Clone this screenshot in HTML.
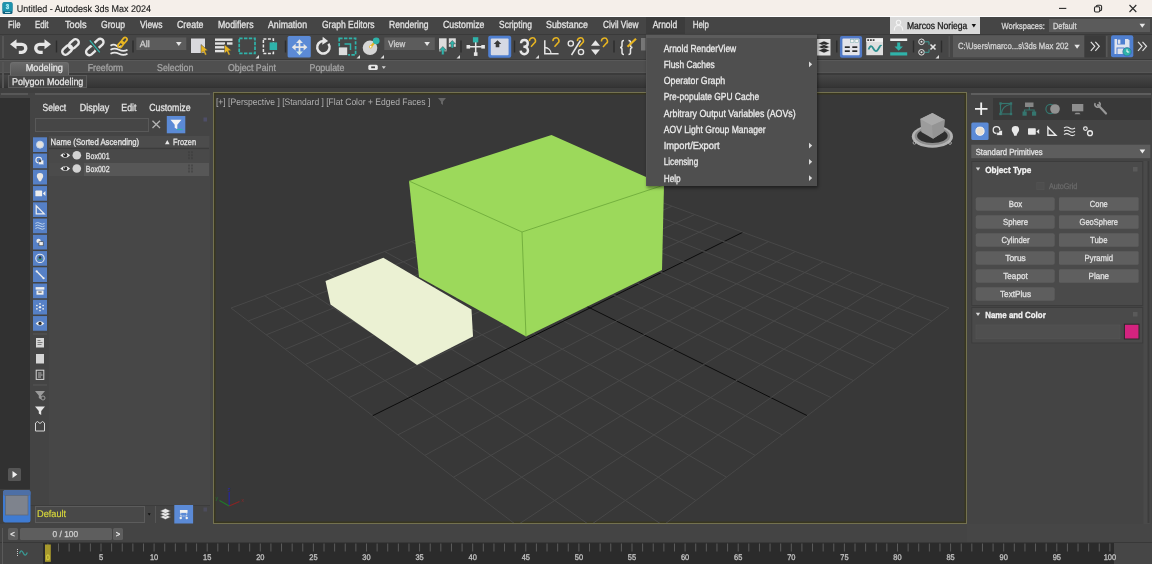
<!DOCTYPE html><html><head><meta charset="utf-8"><title>Untitled - Autodesk 3ds Max 2024</title><style>
*{box-sizing:border-box;margin:0;padding:0}
html,body{width:1152px;height:564px;overflow:hidden;background:#444;font-family:"Liberation Sans",sans-serif;}
.a{position:absolute}
.t{position:absolute;white-space:nowrap;color:#dcdcdc;-webkit-text-stroke:.15px currentColor}
svg{position:absolute;left:0;top:0;overflow:visible}
#vp{left:213px;top:92px;width:754px;height:432px;background:#383838;border:1px solid #737150;overflow:hidden;box-shadow:inset 0 0 0 1.5px #38361f}
</style></head><body>
<div class="a" style="left:0px;top:0px;width:1152px;height:17px;background:#f5efea;"></div>
<div class="a" style="left:0px;top:15.7px;width:1152px;height:1.3px;background:#ffffff;"></div>
<svg width="20" height="17"><rect x="2.500" y="2.300" width="10" height="11.700" rx="1.600" fill="#0f5f7c"/><rect x="2.500" y="2.300" width="10" height="9.200" rx="1.600" fill="#1f93ad"/><rect x="5" y="12.100" width="5.300" height=".9" fill="#c8ecf2"/></svg>
<svg width="1152" height="17"><g stroke="#2a2a2a" stroke-width="1.100" fill="none"><path d="M1059 8.400h7.300"/><rect x="1094.500" y="6.800" width="5.200" height="5.200" rx="1.200"/><path d="M1096.300 6.800v-0.200a1.300 1.300 0 0 1 1.300-1.300h2.700a1.300 1.300 0 0 1 1.300 1.300v2.700a1.300 1.300 0 0 1-1.300 1.300h-0.600"/><path d="M1129.500 5l6.800 7M1136.300 5l-6.800 7"/></g></svg>
<div class="a" style="left:0px;top:17px;width:1152px;height:17px;background:#454545;"></div>
<div class="a" style="left:646px;top:17px;width:39px;height:17px;background:#3c3c3c;"></div>
<div class="a" style="left:890px;top:17px;width:90px;height:16.5px;background:#d9d9d9;"></div>
<div class="a" style="left:1048.5px;top:18.5px;width:101.5px;height:13.5px;background:#5b5b5b;"></div>
<svg width="1152" height="34"><g fill="none" stroke="#f4f4f4" stroke-width="1.100"><circle cx="898.500" cy="22.500" r="2.200"/><path d="M894.300 30.500c0-3.500 1.800-5 4.200-5s4.200 1.500 4.200 5"/></g><path d="M971.600 23.900h4.400l-2.200 3.500z" fill="#111"/><path d="M1139.500 23.800h5.600l-2.800 4z" fill="#e8e8e8"/></svg>
<div class="a" style="left:0px;top:34px;width:1152px;height:26px;background:#464646;"></div>
<div class="a" style="left:0px;top:33.5px;width:1152px;height:1px;background:#3a3a3a;"></div>
<div class="a" style="left:2px;top:36px;width:2px;height:22px;background:#555;"></div>
<svg width="1152" height="62"><g fill="none" stroke="#e6e6e6" stroke-width="3.300" stroke-linejoin="miter"><path d="M15 44.300h6.800a4 4 0 0 1 0 8h-3"/><path d="M46.500 44.300h-6.800a4 4 0 0 0 0 8h3"/></g><path d="M10 44.300l6.500-5v10z" fill="#e6e6e6"/><path d="M51 44.300l-6.500-5v10z" fill="#e6e6e6"/><rect x="55.8" y="40.500" width="1.400" height="12" fill="#2c2c2c"/><rect x="132.3" y="40.500" width="1.400" height="12" fill="#2c2c2c"/><rect x="284.8" y="40.500" width="1.400" height="12" fill="#2c2c2c"/><rect x="460.3" y="40.500" width="1.400" height="12" fill="#2c2c2c"/><rect x="513.8" y="40.500" width="1.400" height="12" fill="#2c2c2c"/><rect x="613.3" y="40.500" width="1.400" height="12" fill="#2c2c2c"/><rect x="836.0999999999999" y="40.500" width="1.400" height="12" fill="#2c2c2c"/><rect x="912.8" y="40.500" width="1.400" height="12" fill="#2c2c2c"/><rect x="940.8" y="40.500" width="1.400" height="12" fill="#2c2c2c"/><g transform="translate(70.5 47) rotate(-42)" fill="none" stroke="#e6e6e6" stroke-width="2.4"><rect x="-10" y="-3.300" width="11" height="6.600" rx="3.300"/><rect x="-1" y="-3.300" width="11" height="6.600" rx="3.300"/></g><g transform="translate(94.8 47) rotate(-42)" fill="none" stroke="#e6e6e6" stroke-width="2.4"><rect x="-10.6" y="-3.300" width="11" height="6.600" rx="3.300"/><rect x="-0.4" y="-3.300" width="11" height="6.600" rx="3.300"/></g><path d="M89.500 40l10.500 12.500" stroke="#444" stroke-width="4"/><path d="M89.800 40.300l10 12" stroke="#2fb3aa" stroke-width="1.300"/><g fill="none" stroke="#e6e6e6" stroke-width="1.800"><path d="M110.500 45.800q3-2.200 6 0t5 0"/><path d="M110.500 49.800q4-2.200 8.500 0t8.500 0"/><path d="M110.500 53.800q4-2.200 8.500 0t8.500 0"/></g><g transform="translate(122.500 42.500) rotate(-50) scale(.6)" fill="none" stroke="#e8b521" stroke-width="2.900"><rect x="-10" y="-3.200" width="11" height="6.400" rx="3.200"/><rect x="-1" y="-3.200" width="11" height="6.400" rx="3.200"/></g><rect x="136.300" y="37.500" width="50" height="12.500" fill="#5c5c5c"/><path d="M176 42h5.600l-2.800 4z" fill="#e6e6e6"/><rect x="191" y="38.500" width="14" height="14.500" fill="#d9d9dd"/><path transform="translate(201 44.5) scale(1)" d="M0 0l0 9 2.300-2 1.800 3.800 1.700-.8-1.800-3.700 3-.3z" fill="#e8b521" stroke="#444" stroke-width=".5"/><rect x="215" y="38.5" width="17.5" height="2.400" fill="#e2e2e2"/><rect x="215" y="42.3" width="10" height="2.400" fill="#e2e2e2"/><rect x="215" y="46.1" width="10" height="2.400" fill="#e2e2e2"/><rect x="215" y="49.9" width="10" height="2.400" fill="#e2e2e2"/><rect x="227" y="42.300" width="5.500" height="2.400" fill="#e2e2e2"/><path transform="translate(224.5 44.5) scale(1)" d="M0 0l0 9 2.300-2 1.800 3.800 1.700-.8-1.800-3.700 3-.3z" fill="#e8b521" stroke="#444" stroke-width=".5"/><rect x="239.200" y="38.400" width="15.800" height="15" fill="none" stroke="#2fb3aa" stroke-width="1.700" stroke-dasharray="3.400 1.400"/><path d="M259 55v3.500h-3.500z" fill="#ddd"/><rect x="263.400" y="39" width="10" height="14.500" fill="none" stroke="#e6e6e6" stroke-width="1.500" stroke-dasharray="3 1.500"/><rect x="269.600" y="42.400" width="7.500" height="7.600" fill="#2fb3aa"/><rect x="287.600" y="36" width="23.200" height="21.500" rx="1.500" fill="#5b8ad6"/><g stroke="#e6e6e6" stroke-width="1.700" fill="none"><path d="M293.500 47.200h12M299.500 41v12.500"/></g><g fill="#e6e6e6"><path d="M299.500 39.200l3.400 3.800h-6.800z"/><path d="M299.500 55.300l3.400-3.800h-6.800z" fill="#cfe9e6"/><path d="M291.800 47.200l3.800-3.400v6.800z"/><path d="M307.400 47.200l-3.800-3.400v6.800z"/></g><path d="M328.400 43.700a6.200 6.200 0 1 1-5-2.600" fill="none" stroke="#e6e6e6" stroke-width="2.500"/><path d="M322.700 36.800l5.400 4.200-5.800 3.800z" fill="#e6e6e6"/><rect x="339.200" y="38.400" width="16.400" height="16.400" fill="none" stroke="#2fb3aa" stroke-width="1.700" stroke-dasharray="3.400 1.400"/><path d="M344.500 44h6v6" fill="none" stroke="#2fb3aa" stroke-width="1.500"/><rect x="338.400" y="47" width="9.300" height="8.600" fill="#dcdcdc" stroke="#444" stroke-width=".8"/><path d="M360 55v3.500h-3.500z" fill="#ddd"/><circle cx="370" cy="47.800" r="7.300" fill="#d6d6d6"/><path d="M370.500 47l4.500-5" stroke="#e8b521" stroke-width="2"/><circle cx="376.200" cy="40.800" r="3.400" fill="#2fb3aa"/><circle cx="370.700" cy="46.800" r="1.300" fill="#fff" stroke="#e8b521" stroke-width=".8"/><path d="M384 55v3.500h-3.500z" fill="#ddd"/><rect x="384.300" y="37.500" width="50.500" height="12.500" fill="#5c5c5c"/><path d="M424.300 42h5.600l-2.800 4z" fill="#e6e6e6"/><rect x="439" y="38.300" width="7.600" height="13" fill="#dcdcdc"/><rect x="448.800" y="38.300" width="7" height="8.500" fill="#dcdcdc"/><path d="M442.800 46.500l3.600 3.800h-2.300v4.500h-2.600v-4.500h-2.300z" fill="#2fb3aa" stroke="#444" stroke-width=".5"/><path d="M452.300 40.500l3.200 3.400h-2v4.200h-2.400v-4.200h-2z" fill="#2fb3aa" stroke="#444" stroke-width=".5"/><path d="M460 55v3.500h-3.500z" fill="#ddd"/><path d="M467.500 46.800h16.500M475.700 40v14" stroke="#e6e6e6" stroke-width="1.500"/><rect x="472.900" y="37.200" width="5.400" height="5.200" fill="#2fb3aa"/><rect x="466.500" y="45" width="3.600" height="3.600" fill="#e6e6e6"/><rect x="481.300" y="45" width="3.600" height="3.600" fill="#e6e6e6"/><rect x="473.900" y="52.300" width="3.600" height="3.600" fill="#e6e6e6"/><rect x="488.200" y="35.800" width="23" height="22" rx="2" fill="#4f7fd0"/><rect x="490.800" y="38.400" width="17.800" height="16.800" rx="1" fill="#d6d9e4"/><path d="M497.500 40.200l3.800 3.800h-2v3.300h-3.600v-3.300h-2z" fill="#3a3a3a"/><path d="M521 43.200a3.400 3.400 0 1 1 3.600 3.600h-1.200 1.200a3.700 3.700 0 1 1-4 3.800" fill="none" stroke="#e6e6e6" stroke-width="2.400"/><path d="M529.5 41.2a3 3 0 1 1 4.500 2.200l-3 3.300" fill="none" stroke="#e8b521" stroke-width="1.500"/><path d="M539 55v3.500h-3.500z" fill="#ddd"/><path d="M544.800 40.300v13.500h13.800" fill="none" stroke="#e6e6e6" stroke-width="1.500"/><path d="M544.800 47.500a6.300 6.300 0 0 1 6.300 6.300" fill="none" stroke="#e6e6e6" stroke-width="1.300"/><path d="M553 41.2a3 3 0 1 1 4.500 2.200l-3 3.300" fill="none" stroke="#e8b521" stroke-width="1.500"/><path d="M580.500 40.500l-9 14.500" stroke="#e6e6e6" stroke-width="1.500"/><circle cx="570.800" cy="43.500" r="2.600" fill="none" stroke="#e6e6e6" stroke-width="1.400"/><circle cx="581" cy="52" r="2.600" fill="none" stroke="#e6e6e6" stroke-width="1.400"/><path d="M577.5 41.2a3 3 0 1 1 4.500 2.200l-3 3.300" fill="none" stroke="#e8b521" stroke-width="1.500"/><path d="M595.500 40.200l4.500 5.600h-9z" fill="#e6e6e6"/><path d="M595.500 55l4.500-5.600h-9z" fill="#e6e6e6"/><path d="M601.5 41.5a3 3 0 1 1 4.500 2.200l-3 3.300" fill="none" stroke="#e8b521" stroke-width="1.500"/><path d="M624 40.500q-2 0-2 2v3q0 2-2 2 2 0 2 2v3q0 2 2 2M628.500 40.500q2 0 2 2v3q0 2 2 2-2 0-2 2v3q0 2-2 2" fill="none" stroke="#e6e6e6" stroke-width="1.500"/><path d="M627.500 46.800l8.500-8" stroke="#e8b521" stroke-width="2.200"/><rect x="641" y="38" width="4.500" height="12.500" fill="#777"/><rect x="817" y="39" width="13.500" height="16.500" fill="#e2e2e2"/><path d="M818 43.5l6-2.600 6 2.600-6 2.600z" fill="#2d2d2d" stroke="#e2e2e2" stroke-width=".6"/><path d="M818 47l6-2.600 6 2.600-6 2.600z" fill="#2d2d2d" stroke="#e2e2e2" stroke-width=".6"/><path d="M818 50.5l6-2.600 6 2.600-6 2.600z" fill="#2d2d2d" stroke="#e2e2e2" stroke-width=".6"/><rect x="839.900" y="36" width="22.200" height="21.700" rx="2" fill="#5079c6"/><rect x="842.400" y="38.500" width="17.200" height="16.700" rx="1" fill="#e3e4ea"/><rect x="850.500" y="39.300" width="3.400" height="3.300" fill="#f4f4f4" stroke="#7aa" stroke-width=".5"/><rect x="855" y="39.300" width="3.400" height="3.300" fill="#f4f4f4" stroke="#7aa" stroke-width=".5"/><g fill="#2c2c2c"><rect x="844.800" y="46.300" width="5" height="1.700"/><rect x="852.300" y="46.300" width="5" height="1.700"/><rect x="844.800" y="50.300" width="5" height="1.700"/><rect x="852.300" y="50.300" width="5" height="1.700"/></g><rect x="866.300" y="38.300" width="16.700" height="16.900" fill="#dedede"/><rect x="866.300" y="38.300" width="16.700" height="3.600" fill="#f0f0f0"/><g fill="#444"><rect x="867.300" y="39.200" width="1.800" height="1.800"/><rect x="870" y="39.200" width="1.800" height="1.800"/><rect x="872.700" y="39.200" width="1.800" height="1.800"/></g><path d="M868.500 49.500q2.200-6 4.800-1t5 .5 3-3" fill="none" stroke="#2b8f8f" stroke-width="1.800"/><rect x="890.200" y="38.500" width="17" height="2.500" fill="#ececec"/><rect x="890.200" y="52.300" width="17" height="3.200" fill="#2fb3aa"/><path d="M897.200 42.500h3v4h2.700l-4.200 4.300-4.200-4.300h2.700z" fill="#2fb3aa"/><g fill="none" stroke="#e6e6e6" stroke-width="1"><circle cx="921.500" cy="41.800" r="2.800"/><circle cx="921.500" cy="52.300" r="2.800"/><path d="M924.500 41.800h4.500v3M924.500 52.300h4.500v-3" stroke="#3a9a94"/></g><circle cx="921.500" cy="41.800" r="1" fill="#e6e6e6"/><circle cx="921.500" cy="52.300" r="1" fill="#e6e6e6"/><path d="M930.500 44.500l5 5M935.500 44.500l-5 5" stroke="#e6e6e6" stroke-width="1.600"/><path d="M939 55v3.500h-3.500z" fill="#ddd"/><rect x="948.500" y="36" width="1.500" height="21" fill="#535353"/><rect x="953" y="35.300" width="131.500" height="22" fill="#595959"/><path d="M1074.300 44.800h5.600l-2.800 4z" fill="#e6e6e6"/><rect x="1084.500" y="35.300" width="21" height="22" fill="#3b3b3b"/><path d="M1090.8 41.800l4 4.500-4 4.500M1095.3 41.800l4 4.500-4 4.500" fill="none" stroke="#e0e0e0" stroke-width="1.200"/><path d="M1138.0 41.800l4 4.500-4 4.500M1142.5 41.800l4 4.500-4 4.500" fill="none" stroke="#e0e0e0" stroke-width="1.200"/><rect x="1106" y="36" width="1.500" height="21" fill="#585858"/><rect x="1111" y="35.300" width="22.300" height="22" rx="2" fill="#4f7fd0"/><path d="M1114.500 39h13.500l1.500 1.500v13.500h-15z" fill="#dfe3ee"/><rect x="1117" y="39" width="8" height="5.500" fill="#4f7fd0"/><rect x="1117.800" y="39.600" width="2.600" height="4.200" fill="#dfe3ee"/><rect x="1116.500" y="47.500" width="8" height="6.500" fill="#4f7fd0"/><rect x="1117.500" y="48.500" width="6" height="5.500" fill="#dfe3ee"/><circle cx="1127" cy="51.800" r="4.200" fill="#2fb3aa" stroke="#2b5d9a" stroke-width=".6"/><path d="M1127 49.300v2.700h2.200" fill="none" stroke="#fff" stroke-width="1"/></svg>
<div class="a" style="left:0px;top:58.5px;width:1152px;height:1.1px;background:#3a3a3a;"></div>
<div class="a" style="left:0px;top:59.6px;width:1152px;height:1px;background:#595959;"></div>
<div class="a" style="left:0px;top:60.5px;width:1152px;height:12.5px;background:#4f4f4f;"></div>
<div class="a" style="left:0px;top:72.2px;width:1152px;height:0.9px;background:#565656;"></div>
<div class="a" style="left:0px;top:73px;width:1152px;height:1.5px;background:#3b3b3b;"></div>
<div class="a" style="left:0px;top:74.5px;width:1152px;height:12.5px;background:#3d3d3d;background:linear-gradient(#474747,#353535)"></div>
<div class="a" style="left:0px;top:87px;width:1152px;height:1.1px;background:#323232;"></div>
<div class="a" style="left:0px;top:88px;width:1152px;height:4.5px;background:#3f3f3f;"></div>
<div class="a" style="left:2px;top:62px;width:2px;height:26px;background:#555;"></div>
<div class="a" style="left:9.8px;top:62px;width:59.2px;height:12.5px;background:#5e5e5e;border-radius:3px 3px 0 0;background:linear-gradient(#6a6a6a,#565656);border:1px solid #6e6e6e;border-bottom:none"></div>
<svg width="400" height="80"><rect x="368.300" y="64.800" width="9.500" height="5.200" rx="1.600" fill="#e8e8e8"/><rect x="371.200" y="66.400" width="3.800" height="1.800" fill="#444"/><path d="M381.800 66.300h4l-2 2.600z" fill="#d0d0d0"/></svg>
<div class="a" style="left:8px;top:74.5px;width:79px;height:13.3px;background:#444;border:1px solid #5a5a5a;background:#454545"></div>
<div class="a" style="left:1px;top:93.3px;width:27px;height:1.6px;background:#585858;"></div>
<div class="a" style="left:35px;top:93.3px;width:175px;height:1.6px;background:#585858;"></div>
<div class="a" style="left:970.5px;top:93.3px;width:180px;height:1.6px;background:#5e5e5e;"></div>
<div class="a" style="left:0px;top:97.5px;width:30px;height:391.5px;background:#313131;"></div>
<div class="a" style="left:0px;top:489px;width:30px;height:35px;background:#3f3f3f;"></div>
<div class="a" style="left:30px;top:96px;width:180px;height:428px;background:#444444;"></div>
<div class="a" style="left:48.5px;top:136px;width:161px;height:368.5px;background:#474747;"></div>
<div class="a" style="left:7.5px;top:467.5px;width:13.8px;height:13.8px;background:#555;border-radius:1.500px"></div>
<svg width="40" height="530"><path d="M12.500 471l4.800 3.500-4.800 3.500z" fill="#f0f0f0"/></svg>
<div class="a" style="left:35px;top:117.5px;width:114px;height:14.5px;background:#464646;border:1px solid #595959"></div>
<svg width="215" height="140"><path d="M152.500 120.800l7.500 7.200M160 120.800l-7.500 7.200" stroke="#b4b4b4" stroke-width="1.300"/><rect x="166.800" y="116" width="18.500" height="17.300" fill="#5b8ad6"/><path d="M170.500 119.800h11l-4.200 5v4.500l-2.600-1.500v-3z" fill="#f4f4f4"/><path d="M177 129.500h5.500" stroke="#2fb3aa" stroke-width="1.300"/><rect x="203.500" y="117.500" width="3.500" height="4" fill="#4e4e68"/></svg>
<div class="a" style="left:48.5px;top:136.2px;width:160.5px;height:11.3px;background:#4c4c4c;"></div>
<div class="a" style="left:48.5px;top:147.5px;width:160.5px;height:1px;background:#3c3c3c;"></div>
<svg width="215" height="150"><path d="M165 144.300l2.300-4.300 2.300 4.300z" fill="#e8e8e8"/></svg>
<div class="a" style="left:48.5px;top:149.5px;width:160.5px;height:13px;background:#494949;"></div>
<div class="a" style="left:83.5px;top:163px;width:125.5px;height:12.7px;background:#575757;"></div>
<div class="a" style="left:48.5px;top:163px;width:35px;height:12.7px;background:#4b4b4b;"></div>
<svg width="215" height="180"><path d="M60.300 155.2q4.900-5 9.800 0q-4.900 5-9.800 0z" fill="#ececec"/><circle cx="65.200" cy="155.2" r="2.100" fill="#2a2a2a"/><circle cx="64.500" cy="154.5" r=".7" fill="#bbb"/><circle cx="76.800" cy="155.2" r="4.300" fill="#d2d2d2"/><path d="M189 151.2v8M192 151.2v8" stroke="#3b3b3b" stroke-width="1" stroke-dasharray="2 1"/><path d="M60.300 168.5q4.900-5 9.800 0q-4.900 5-9.800 0z" fill="#ececec"/><circle cx="65.200" cy="168.5" r="2.100" fill="#2a2a2a"/><circle cx="64.500" cy="167.8" r=".7" fill="#bbb"/><circle cx="76.800" cy="168.5" r="4.300" fill="#d2d2d2"/><path d="M189 164.5v8M192 164.5v8" stroke="#3b3b3b" stroke-width="1" stroke-dasharray="2 1"/></svg>
<svg width="60" height="440"><rect x="33" y="137.30" width="14" height="14.700" fill="#5680c6"/><rect x="33" y="153.55" width="14" height="14.700" fill="#5680c6"/><rect x="33" y="169.80" width="14" height="14.700" fill="#5680c6"/><rect x="33" y="186.05" width="14" height="14.700" fill="#5680c6"/><rect x="33" y="202.30" width="14" height="14.700" fill="#5680c6"/><rect x="33" y="218.55" width="14" height="14.700" fill="#5680c6"/><rect x="33" y="234.80" width="14" height="14.700" fill="#5680c6"/><rect x="33" y="251.05" width="14" height="14.700" fill="#5680c6"/><rect x="33" y="267.30" width="14" height="14.700" fill="#5680c6"/><rect x="33" y="283.55" width="14" height="14.700" fill="#5680c6"/><rect x="33" y="299.80" width="14" height="14.700" fill="#5680c6"/><rect x="33" y="316.05" width="14" height="14.700" fill="#5680c6"/><circle cx="40" cy="144.65" r="3.500" fill="#e6e2dc" stroke="#c4d8f0" stroke-width="1"/><g transform="translate(40 160.90) scale(.84) translate(-40 -160.90)"><circle cx="38.500" cy="159.90" r="3.400" fill="none" stroke="#eeeeee" stroke-width="1.300"/><rect x="38.500" y="159.90" width="6" height="5.500" fill="#eeeeee" stroke="#5680c6" stroke-width=".6"/><circle cx="40" cy="160.90" r="1.500" fill="#555"/></g><g transform="translate(40 177.15) scale(.84) translate(-40 -177.15)"><path d="M40 172.15a3.800 3.800 0 0 1 3.800 3.800c0 2.300-2.300 3.400-2.600 6.200h-2.400c-.3-2.800-2.600-3.900-2.600-6.200a3.800 3.800 0 0 1 3.800-3.800z" fill="#ece8e2"/></g><g transform="translate(40 193.40) scale(.84) translate(-40 -193.40)"><rect x="34.500" y="189.90" width="8" height="7" rx=".8" fill="#eeeeee"/><path d="M43.300 193.40l3.200-3v6z" fill="#eeeeee"/></g><g transform="translate(40 209.65) scale(.84) translate(-40 -209.65)"><path d="M35.500 205.15v9.500h9.500z" fill="none" stroke="#eeeeee" stroke-width="1.500"/></g><g transform="translate(40 225.90) scale(.84) translate(-40 -225.90)"><g fill="none" stroke="#c4d8ee" stroke-width="1.100"><path d="M34.500 222.90q2.800-2 5.500 0t5.500 0"/><path d="M34.500 225.90q2.800-2 5.500 0t5.500 0"/><path d="M34.500 228.90q2.800-2 5.500 0t5.500 0"/></g></g><g transform="translate(40 242.15) scale(.84) translate(-40 -242.15)"><circle cx="38.300" cy="240.65" r="2.600" fill="#eeeeee"/><rect x="38.800" y="241.65" width="5" height="4.800" fill="#eeeeee" stroke="#3c3c3c" stroke-width=".7"/></g><g transform="translate(40 258.40) scale(.84) translate(-40 -258.40)"><circle cx="40" cy="258.40" r="5" fill="none" stroke="#eeeeee" stroke-width="1.200"/><path d="M40 255.40l3 5h-6z" fill="#3a8f88"/><circle cx="40" cy="257.40" r="1.500" fill="#333"/></g><g transform="translate(40 274.65) scale(.84) translate(-40 -274.65)"><path d="M36 270.65l8 8" stroke="#eeeeee" stroke-width="1.600"/><circle cx="36" cy="270.65" r="1.300" fill="#eeeeee"/><circle cx="44.300" cy="278.95" r="1.300" fill="#eeeeee"/></g><g transform="translate(40 290.90) scale(.84) translate(-40 -290.90)"><rect x="34.800" y="286.40" width="10.400" height="3" fill="#eeeeee"/><rect x="35.800" y="290.40" width="8.400" height="5" fill="#eeeeee"/><rect x="38" y="291.70" width="4" height="1.200" fill="#444"/></g><g transform="translate(40 307.15) scale(.84) translate(-40 -307.15)"><g fill="#eeeeee"><circle cx="40" cy="307.15" r="1.400"/><circle cx="40" cy="303.15" r="1"/><circle cx="40" cy="311.15" r="1"/><circle cx="36.300" cy="305.15" r="1"/><circle cx="43.700" cy="305.15" r="1"/><circle cx="36.300" cy="309.15" r="1"/><circle cx="43.700" cy="309.15" r="1"/></g></g><g transform="translate(40 323.40) scale(.84) translate(-40 -323.40)"><path d="M34.800 323.40q5.200-5.200 10.400 0q-5.200 5.200-10.400 0z" fill="#eeeeee"/><circle cx="40" cy="323.40" r="2" fill="#2a2a2a"/></g><rect x="33" y="333.500" width="14" height="1" fill="#565656"/><rect x="33" y="384.500" width="14" height="1" fill="#565656"/><rect x="36" y="338" width="8" height="9.500" fill="#d6d6d6"/><path d="M37.500 340.500h3M37.500 342.500h5M37.500 344.500h4" stroke="#666" stroke-width=".8"/><rect x="36" y="354" width="8" height="9.500" fill="#d6d6d6"/><rect x="36.200" y="370.200" width="7.600" height="9.200" fill="none" stroke="#d6d6d6" stroke-width="1"/><path d="M38 373h3.500M38 375h4.500M38 377h3" stroke="#d6d6d6" stroke-width=".8"/><path d="M35 391h10l-3.800 4.500v4l-2.400-1.400v-2.600z" fill="#9a9a9a"/><circle cx="43" cy="398" r="2" fill="none" stroke="#9a9a9a" stroke-width="1"/><path d="M35 406.500h10l-3.800 4.500v4l-2.400-1.400v-2.600z" fill="#e6e6e6"/><path d="M35.500 431v-8l2-1.500 2.500 2 2.500-2 2 1.500v8z" fill="none" stroke="#d6d6d6" stroke-width="1"/></svg>
<div class="a" style="left:30px;top:504.5px;width:180px;height:1px;background:#3c3c3c;"></div>
<svg width="215" height="530"><rect x="3" y="490" width="27.500" height="32.500" rx="2.500" fill="#3f7bd2"/><rect x="3" y="490" width="27.500" height="6" rx="2.500" fill="#4d6fa6"/><rect x="5.500" y="495.500" width="22.500" height="19.500" fill="#7e838d" stroke="#626a78" stroke-width=".8"/><path d="M147.700 513.200h3l-1.500 2.300z" fill="#101010"/><rect x="155" y="506" width="1" height="17" fill="#565656"/><g fill="#e8e8e8" stroke="#444" stroke-width=".5"><path d="M160 517l5.400-2.500 5.400 2.500-5.400 2.500z"/><path d="M160 514l5.400-2.500 5.400 2.500-5.400 2.500z"/><path d="M160 511l5.400-2.500 5.400 2.500-5.400 2.500z"/></g><rect x="174.300" y="505" width="18.800" height="18.500" fill="#5b8ad6"/><g transform="translate(183.700 514.400) scale(.8) translate(-183.700 -514)"><rect x="179" y="508.500" width="9.500" height="3.600" fill="#f0f0f0"/><path d="M180 512.500v3.500M187.500 512.500v3.500M180 516h7.500" stroke="#f0f0f0" stroke-width="1" stroke-dasharray="1.500 .8" fill="none"/><circle cx="180" cy="518.500" r="1.500" fill="#f0f0f0"/><circle cx="187.500" cy="518.500" r="1.500" fill="#f0f0f0"/></g><rect x="203.500" y="507.500" width="3.500" height="4" fill="#4c4c5c"/></svg>
<div class="a" style="left:35px;top:506px;width:110px;height:16.5px;background:#484848;border:1px solid #5c5c5c"></div>
<div id="vp" class="a"><svg style="left:-214px;top:-93px" width="1152" height="564" viewBox="0 0 1152 564">
<g stroke-width="1"><line x1="231.0" y1="308.0" x2="590.0" y2="176.0" stroke="#484848"/><line x1="231.0" y1="308.0" x2="590.0" y2="581.0" stroke="#484848"/><line x1="248.1" y1="321.0" x2="609.4" y2="183.1" stroke="#484848"/><line x1="264.7" y1="295.6" x2="627.9" y2="552.2" stroke="#484848"/><line x1="266.2" y1="334.8" x2="629.5" y2="190.5" stroke="#484848"/><line x1="296.9" y1="283.8" x2="663.1" y2="525.4" stroke="#484848"/><line x1="285.2" y1="349.2" x2="650.4" y2="198.2" stroke="#484848"/><line x1="327.5" y1="272.5" x2="695.9" y2="500.5" stroke="#484848"/><line x1="305.2" y1="364.5" x2="672.1" y2="206.2" stroke="#484848"/><line x1="356.8" y1="261.8" x2="726.5" y2="477.2" stroke="#484848"/><line x1="326.4" y1="380.6" x2="694.8" y2="214.5" stroke="#484848"/><line x1="384.7" y1="251.5" x2="755.2" y2="455.4" stroke="#484848"/><line x1="348.9" y1="397.6" x2="718.3" y2="223.2" stroke="#484848"/><line x1="411.5" y1="241.6" x2="782.1" y2="434.9" stroke="#484848"/><line x1="372.7" y1="415.7" x2="742.9" y2="232.2" stroke="#0c0c0c"/><line x1="437.1" y1="232.2" x2="807.3" y2="415.7" stroke="#0c0c0c"/><line x1="397.9" y1="434.9" x2="768.5" y2="241.6" stroke="#484848"/><line x1="461.7" y1="223.2" x2="831.1" y2="397.6" stroke="#484848"/><line x1="424.8" y1="455.4" x2="795.3" y2="251.5" stroke="#484848"/><line x1="485.2" y1="214.5" x2="853.6" y2="380.6" stroke="#484848"/><line x1="453.5" y1="477.2" x2="823.2" y2="261.8" stroke="#484848"/><line x1="507.9" y1="206.2" x2="874.8" y2="364.5" stroke="#484848"/><line x1="484.1" y1="500.5" x2="852.5" y2="272.5" stroke="#484848"/><line x1="529.6" y1="198.2" x2="894.8" y2="349.2" stroke="#484848"/><line x1="516.9" y1="525.4" x2="883.1" y2="283.8" stroke="#484848"/><line x1="550.5" y1="190.5" x2="913.8" y2="334.8" stroke="#484848"/><line x1="552.1" y1="552.2" x2="915.3" y2="295.6" stroke="#484848"/><line x1="570.6" y1="183.1" x2="931.9" y2="321.0" stroke="#484848"/><line x1="590.0" y1="581.0" x2="949.0" y2="308.0" stroke="#484848"/><line x1="590.0" y1="176.0" x2="949.0" y2="308.0" stroke="#484848"/></g>
<polygon points="409,181 551.5,135 664,185 662,270 526,336.5 419,277" fill="#9cd95b"/>
<g stroke="#6aa637" stroke-width="0.8" fill="none"><path d="M409,181 L522,232 L664,185"/><path d="M522,232 L526,336.5"/></g>
<polygon points="383.3,257.8 325.5,281 330.5,304.6 417,365 473,336.5 471.5,309.5" fill="#ebf1d3"/>
<ellipse cx="932.4" cy="136.4" rx="20.600" ry="11.300" fill="#b2b2b2"/><ellipse cx="932.4" cy="136" rx="17.800" ry="9.200" fill="#8c8c8c"/><ellipse cx="932.4" cy="135.800" rx="15.300" ry="7.300" fill="#2e2e2e"/>
<circle cx="914.500" cy="142.800" r="1.400" fill="none" stroke="#c8c8c8" stroke-width=".7"/><circle cx="950" cy="143" r="1.400" fill="none" stroke="#c8c8c8" stroke-width=".7"/>
<polygon points="932.4,113 944.7,119.7 943.6,131.9 933,138.8 921.3,131.9 920.2,119.1" fill="#9c9c9c"/>
<polygon points="932.4,113 944.7,119.7 932,125.5 920.2,119.1" fill="#a9a9a9"/>
<polygon points="932,125.5 944.7,119.7 943.6,131.9 933,138.8" fill="#949494"/>
<g stroke-width="1.2" fill="none"><path d="M229.200,506 L229.200,492" stroke="#2525a0"/><path d="M229.200,506 L239.500,501.500" stroke="#8a2424"/><path d="M229.200,506 L219.500,500.500" stroke="#1f7a2a"/></g><g font-size="5" font-family="Liberation Sans"><text x="241" y="502" fill="#8a2424">x</text><text x="215.500" y="500" fill="#1f7a2a">y</text><text x="228" y="491" fill="#2525a0">z</text></g>
</svg>
<svg style="left:0;top:0" width="754" height="432"><path d="M224,5 h8 l-3,3.5 v3.5 l-2,-1.5 v-2 z" fill="#666"/></svg>
</div>
<div class="a" style="left:970px;top:96px;width:182px;height:428px;background:#444444;"></div>
<div class="a" style="left:992.5px;top:98px;width:158px;height:21.5px;background:#393939;"></div>
<div class="a" style="left:971.5px;top:98px;width:21px;height:21.5px;background:#444;"></div>
<svg width="1152" height="530"><path d="M975 108.800h12.500M981.200 102.500v12.500" stroke="#f2f2f2" stroke-width="1.800"/><rect x="1000.500" y="103.500" width="10.500" height="10.500" fill="none" stroke="#35766f" stroke-width="1.200"/><path d="M1001.500 113q1-7 8.500-8.500" fill="none" stroke="#35766f" stroke-width="1.200"/><rect x="999.3" y="102.3" width="2.400" height="2.400" fill="#35766f"/><rect x="1009.8" y="102.3" width="2.400" height="2.400" fill="#35766f"/><rect x="999.3" y="112.8" width="2.400" height="2.400" fill="#35766f"/><rect x="1009.8" y="112.8" width="2.400" height="2.400" fill="#35766f"/><rect x="1025" y="102.500" width="8.500" height="4.500" fill="#868686"/><path d="M1029.300 107v3M1024.500 113v-3h9.600v3" fill="none" stroke="#35766f" stroke-width="1.200"/><rect x="1022.500" y="111.500" width="4.200" height="4.200" fill="#35766f"/><rect x="1032" y="111.500" width="4.200" height="4.200" fill="#35766f"/><circle cx="1050.500" cy="109" r="4.600" fill="none" stroke="#35766f" stroke-width="1.200"/><circle cx="1055" cy="109" r="4.800" fill="#929292"/><rect x="1072" y="104" width="11.300" height="7.300" fill="#8e8e8e"/><path d="M1074.500 114.300h6l-1.200-1.600h-3.600z" fill="#8e8e8e"/><path d="M1098 105l8 8.500" stroke="#989898" stroke-width="2.200" stroke-linecap="round"/><circle cx="1097.500" cy="104.500" r="2.600" fill="none" stroke="#989898" stroke-width="1.500" stroke-dasharray="12 4.300" transform="rotate(-60 1097.500 104.500)"/><rect x="971.300" y="122.600" width="17.300" height="17.300" rx="1.500" fill="#5b8ad6"/><circle cx="980" cy="131.200" r="4.100" fill="#ebe0d0" stroke="#f4f4f4" stroke-width="1"/><circle cx="996.500" cy="130" r="3.300" fill="none" stroke="#e8e8e8" stroke-width="1.300"/><rect x="996.800" y="130.300" width="5.500" height="5" fill="#e8e8e8" stroke="#444" stroke-width=".6"/><circle cx="998" cy="131.500" r="1.300" fill="#444"/><path d="M1015.400 126a3.700 3.700 0 0 1 3.700 3.700c0 2.200-2.200 3.300-2.500 6h-2.400c-.3-2.700-2.500-3.800-2.500-6a3.700 3.700 0 0 1 3.700-3.700z" fill="#e8e8e8"/><rect x="1028" y="128.200" width="7.800" height="6.600" rx=".8" fill="#e8e8e8"/><path d="M1036.400 131.500l2.800-2.600v5.200z" fill="#e8e8e8"/><path d="M1047.900 127.300v8h8z" fill="none" stroke="#e8e8e8" stroke-width="1.400"/><g fill="none" stroke="#e8e8e8" stroke-width="1.100"><path d="M1064 128q2.800-2 5.500 0t5.500 0"/><path d="M1064 131.300q2.800-2 5.500 0t5.500 0"/><path d="M1064 134.600q2.800-2 5.500 0t5.500 0"/></g><circle cx="1085.400" cy="128.600" r="1.800" fill="none" stroke="#e8e8e8" stroke-width="1.200"/><circle cx="1090" cy="133.200" r="2.400" fill="none" stroke="#e8e8e8" stroke-width="1.400"/><rect x="971.300" y="144.700" width="179" height="13.500" fill="#5d5d5d"/><path d="M1139.600 149.600h5.600l-2.800 4z" fill="#efefef"/><rect x="971.800" y="161.500" width="171" height="144" fill="#4a4a4a" stroke="#3c3c3c" stroke-width="1"/><rect x="971.800" y="307.500" width="171" height="35.500" fill="#4a4a4a" stroke="#3c3c3c" stroke-width="1"/><rect x="1143.500" y="161" width="7" height="363" fill="#4a4a4a"/><rect x="1147.500" y="161" width="2" height="362" fill="#3c3c3c"/><path d="M975.800 167.600h4.400l-2.200 3.200z" fill="#d8d8d8"/><path d="M975.800 312.800h4.400l-2.200 3.200z" fill="#d8d8d8"/><rect x="1133" y="167" width="4.500" height="4.500" fill="#5a5a5a"/><rect x="1133" y="312" width="4.500" height="4.500" fill="#5a5a5a"/><rect x="1036.800" y="182.500" width="7.200" height="7.200" fill="#4e4e4e" stroke="#555" stroke-width=".6"/><rect x="975.700" y="197.2" width="79" height="13.600" rx="2" fill="#5e5e5e"/><rect x="1059" y="197.2" width="79.600" height="13.600" rx="1.3" fill="#5f5f5f"/><rect x="975.700" y="215.2" width="79" height="13.600" rx="2" fill="#5e5e5e"/><rect x="1059" y="215.2" width="79.600" height="13.600" rx="1.3" fill="#5f5f5f"/><rect x="975.700" y="233.2" width="79" height="13.600" rx="2" fill="#5e5e5e"/><rect x="1059" y="233.2" width="79.600" height="13.600" rx="1.3" fill="#5f5f5f"/><rect x="975.700" y="251.2" width="79" height="13.600" rx="2" fill="#5e5e5e"/><rect x="1059" y="251.2" width="79.600" height="13.600" rx="1.3" fill="#5f5f5f"/><rect x="975.700" y="269.2" width="79" height="13.600" rx="2" fill="#5e5e5e"/><rect x="1059" y="269.2" width="79.600" height="13.600" rx="1.3" fill="#5f5f5f"/><rect x="975.700" y="287.2" width="79" height="13.600" rx="2" fill="#5e5e5e"/><rect x="976" y="325" width="144" height="13.800" fill="#4f4f4f" stroke="#565656" stroke-width=".6"/><rect x="1124.400" y="324.200" width="14.600" height="14.800" fill="#d4237f" stroke="#2a2a2a" stroke-width="1"/></svg>
<div class="a" style="left:0px;top:524px;width:1152px;height:40px;background:#444444;"></div>
<div class="a" style="left:967px;top:524px;width:185px;height:40px;background:#464646;"></div>
<div class="a" style="left:7.5px;top:528px;width:10px;height:12px;background:#5e5e5e;border-radius:1.500px"></div>
<div class="a" style="left:19.5px;top:528px;width:92px;height:12px;background:#5e5e5e;border-radius:1.500px"></div>
<div class="a" style="left:113px;top:528px;width:10px;height:12px;background:#5e5e5e;border-radius:1.500px"></div>
<div class="a" style="left:42.5px;top:543px;width:1071.5px;height:21px;background:#2b2b2b;"></div>
<div class="a" style="left:0px;top:542.3px;width:1152px;height:0.9px;background:#383838;"></div>
<div class="a" style="left:1.5px;top:528px;width:1.5px;height:36px;background:#5a5a5a;"></div>
<svg width="1152" height="564"><path d="M47.90 543.500v8M58.52 543.500v8M69.14 543.500v8M79.76 543.500v8M90.38 543.500v8M101.00 543.500v8M111.62 543.500v8M122.24 543.500v8M132.86 543.500v8M143.48 543.500v8M154.10 543.500v8M164.72 543.500v8M175.34 543.500v8M185.96 543.500v8M196.58 543.500v8M207.20 543.500v8M217.82 543.500v8M228.44 543.500v8M239.06 543.500v8M249.68 543.500v8M260.30 543.500v8M270.92 543.500v8M281.54 543.500v8M292.16 543.500v8M302.78 543.500v8M313.40 543.500v8M324.02 543.500v8M334.64 543.500v8M345.26 543.500v8M355.88 543.500v8M366.50 543.500v8M377.12 543.500v8M387.74 543.500v8M398.36 543.500v8M408.98 543.500v8M419.60 543.500v8M430.22 543.500v8M440.84 543.500v8M451.46 543.500v8M462.08 543.500v8M472.70 543.500v8M483.32 543.500v8M493.94 543.500v8M504.56 543.500v8M515.18 543.500v8M525.80 543.500v8M536.42 543.500v8M547.04 543.500v8M557.66 543.500v8M568.28 543.500v8M578.90 543.500v8M589.52 543.500v8M600.14 543.500v8M610.76 543.500v8M621.38 543.500v8M632.00 543.500v8M642.62 543.500v8M653.24 543.500v8M663.86 543.500v8M674.48 543.500v8M685.10 543.500v8M695.72 543.500v8M706.34 543.500v8M716.96 543.500v8M727.58 543.500v8M738.20 543.500v8M748.82 543.500v8M759.44 543.500v8M770.06 543.500v8M780.68 543.500v8M791.30 543.500v8M801.92 543.500v8M812.54 543.500v8M823.16 543.500v8M833.78 543.500v8M844.40 543.500v8M855.02 543.500v8M865.64 543.500v8M876.26 543.500v8M886.88 543.500v8M897.50 543.500v8M908.12 543.500v8M918.74 543.500v8M929.36 543.500v8M939.98 543.500v8M950.60 543.500v8M961.22 543.500v8M971.84 543.500v8M982.46 543.500v8M993.08 543.500v8M1003.70 543.500v8M1014.32 543.500v8M1024.94 543.500v8M1035.56 543.500v8M1046.18 543.500v8M1056.80 543.500v8M1067.42 543.500v8M1078.04 543.500v8M1088.66 543.500v8M1099.28 543.500v8M1109.90 543.500v8" stroke="#5c5c5c" stroke-width="1" fill="none"/><rect x="45.00" y="544.500" width="5.800" height="17.300" fill="#a89a2c"/><g fill="none" stroke="#3a9a94" stroke-width="1.300"><path d="M19.500 553.500q1.800-5 3.800-.5t4 -.5"/></g><path d="M17.500 549v8" stroke="#ccc" stroke-width="1" stroke-dasharray="1 1"/></svg>
<div class="a" style="left:645.5px;top:33.5px;width:171.5px;height:152px;background:#4f4f4f;box-shadow:1px 2px 3px rgba(0,0,0,.45);border-left:1px solid #555"></div>
<div class="a" style="left:646px;top:35.3px;width:171px;height:2.8px;background:#5c5c5c;"></div>
<div class="a" style="left:645.5px;top:33.5px;width:171.5px;height:1.8px;background:#424242;"></div>
<svg width="1152" height="200"><path d="M809 61.55l3.200 2.800-3.200 2.800z" fill="#dcdcdc"/><path d="M809 142.80l3.200 2.800-3.200 2.800z" fill="#dcdcdc"/><path d="M809 159.05l3.200 2.800-3.200 2.800z" fill="#dcdcdc"/><path d="M809 175.30l3.200 2.800-3.200 2.800z" fill="#dcdcdc"/></svg>
<svg width="1152" height="564" style="will-change:transform"><g font-family="Liberation Sans, sans-serif" text-rendering="geometricPrecision"><text transform="translate(5.80 9.04) scale(0.899 1)" font-size="6.8" fill="#b4f2fa" stroke="#b4f2fa" stroke-width="0.3" font-weight="bold">3</text><text transform="translate(16.70 11.94) scale(0.927 1)" font-size="9.7" fill="#1c1c1c" stroke="#1c1c1c" stroke-width="0.15">Untitled - Autodesk 3ds Max 2024</text><text transform="translate(8.00 28.19) scale(0.753 1)" font-size="10.3" fill="#e4e4e4" stroke="#e4e4e4" stroke-width="0.3">File</text><text transform="translate(35.00 28.19) scale(0.761 1)" font-size="10.3" fill="#e4e4e4" stroke="#e4e4e4" stroke-width="0.3">Edit</text><text transform="translate(65.00 28.19) scale(0.894 1)" font-size="10.3" fill="#e4e4e4" stroke="#e4e4e4" stroke-width="0.3">Tools</text><text transform="translate(101.00 28.19) scale(0.838 1)" font-size="10.3" fill="#e4e4e4" stroke="#e4e4e4" stroke-width="0.3">Group</text><text transform="translate(140.00 28.19) scale(0.825 1)" font-size="10.3" fill="#e4e4e4" stroke="#e4e4e4" stroke-width="0.3">Views</text><text transform="translate(177.00 28.19) scale(0.857 1)" font-size="10.3" fill="#e4e4e4" stroke="#e4e4e4" stroke-width="0.3">Create</text><text transform="translate(218.00 28.19) scale(0.850 1)" font-size="10.3" fill="#e4e4e4" stroke="#e4e4e4" stroke-width="0.3">Modifiers</text><text transform="translate(268.00 28.19) scale(0.852 1)" font-size="10.3" fill="#e4e4e4" stroke="#e4e4e4" stroke-width="0.3">Animation</text><text transform="translate(322.00 28.19) scale(0.826 1)" font-size="10.3" fill="#e4e4e4" stroke="#e4e4e4" stroke-width="0.3">Graph Editors</text><text transform="translate(389.00 28.19) scale(0.831 1)" font-size="10.3" fill="#e4e4e4" stroke="#e4e4e4" stroke-width="0.3">Rendering</text><text transform="translate(443.00 28.19) scale(0.853 1)" font-size="10.3" fill="#e4e4e4" stroke="#e4e4e4" stroke-width="0.3">Customize</text><text transform="translate(499.00 28.19) scale(0.824 1)" font-size="10.3" fill="#e4e4e4" stroke="#e4e4e4" stroke-width="0.3">Scripting</text><text transform="translate(546.00 28.19) scale(0.863 1)" font-size="10.3" fill="#e4e4e4" stroke="#e4e4e4" stroke-width="0.3">Substance</text><text transform="translate(603.00 28.19) scale(0.799 1)" font-size="10.3" fill="#e4e4e4" stroke="#e4e4e4" stroke-width="0.3">Civil View</text><text transform="translate(652.70 28.19) scale(0.820 1)" font-size="10.3" fill="#e4e4e4" stroke="#e4e4e4" stroke-width="0.3">Arnold</text><text transform="translate(692.70 28.19) scale(0.769 1)" font-size="10.3" fill="#e4e4e4" stroke="#e4e4e4" stroke-width="0.3">Help</text><text transform="translate(906.90 28.61) scale(0.867 1)" font-size="9.9" fill="#1a1a1a" stroke="#1a1a1a" stroke-width="0.3">Marcos Noriega</text><text transform="translate(1001.60 29.03) scale(0.854 1)" font-size="8.8" fill="#d8d8d8" stroke="#d8d8d8" stroke-width="0.3">Workspaces:</text><text transform="translate(1053.00 29.03) scale(0.843 1)" font-size="8.8" fill="#d8d8d8" stroke="#d8d8d8" stroke-width="0.3">Default</text><text transform="translate(139.70 46.90) scale(1.000 1)" font-size="9" fill="#cfcfcf" stroke="#cfcfcf" stroke-width="0.3">All</text><text transform="translate(388.30 46.90) scale(0.879 1)" font-size="9" fill="#cfcfcf" stroke="#cfcfcf" stroke-width="0.3">View</text><text transform="translate(958.00 49.40) scale(0.860 1)" font-size="9" fill="#d4d4d4" stroke="#d4d4d4" stroke-width="0.3">C:\Users\marco...s\3ds Max 202</text><text transform="translate(25.70 70.81) scale(0.928 1)" font-size="9.9" fill="#e6e6e6" stroke="#e6e6e6" stroke-width="0.3">Modeling</text><text transform="translate(87.80 70.81) scale(0.882 1)" font-size="9.9" fill="#a4a4a4" stroke="#a4a4a4" stroke-width="0.3">Freeform</text><text transform="translate(157.00 70.81) scale(0.896 1)" font-size="9.9" fill="#a4a4a4" stroke="#a4a4a4" stroke-width="0.3">Selection</text><text transform="translate(228.00 70.81) scale(0.890 1)" font-size="9.9" fill="#a4a4a4" stroke="#a4a4a4" stroke-width="0.3">Object Paint</text><text transform="translate(309.50 70.81) scale(0.896 1)" font-size="9.9" fill="#a4a4a4" stroke="#a4a4a4" stroke-width="0.3">Populate</text><text transform="translate(12.00 84.81) scale(0.909 1)" font-size="9.9" fill="#e4e4e4" stroke="#e4e4e4" stroke-width="0.3">Polygon Modeling</text><text transform="translate(42.50 110.64) scale(0.824 1)" font-size="10.3" fill="#e2e2e2" stroke="#e2e2e2" stroke-width="0.3">Select</text><text transform="translate(79.80 110.64) scale(0.874 1)" font-size="10.3" fill="#e2e2e2" stroke="#e2e2e2" stroke-width="0.3">Display</text><text transform="translate(121.30 110.64) scale(0.856 1)" font-size="10.3" fill="#e2e2e2" stroke="#e2e2e2" stroke-width="0.3">Edit</text><text transform="translate(149.20 110.64) scale(0.851 1)" font-size="10.3" fill="#e2e2e2" stroke="#e2e2e2" stroke-width="0.3">Customize</text><text transform="translate(50.60 144.90) scale(0.859 1)" font-size="9" fill="#e4e4e4" stroke="#e4e4e4" stroke-width="0.3">Name (Sorted Ascending)</text><text transform="translate(173.00 144.90) scale(0.821 1)" font-size="9" fill="#e4e4e4" stroke="#e4e4e4" stroke-width="0.3">Frozen</text><text transform="translate(85.80 158.99) scale(0.807 1)" font-size="8.7" fill="#e0e0e0" stroke="#e0e0e0" stroke-width="0.3">Box001</text><text transform="translate(85.80 172.29) scale(0.807 1)" font-size="8.7" fill="#e0e0e0" stroke="#e0e0e0" stroke-width="0.3">Box002</text><text transform="translate(37.00 517.37) scale(0.940 1)" font-size="9.8" fill="#d8d83c" stroke="#d8d83c" stroke-width="0.15">Default</text><text transform="translate(216.00 104.98) scale(0.910 1)" font-size="9.4" fill="#b0b0b0">[+] [Perspective ] [Standard ] [Flat Color + Edged Faces ]</text><text transform="translate(975.70 154.63) scale(0.878 1)" font-size="8.8" fill="#e2e2e2" stroke="#e2e2e2" stroke-width="0.3">Standard Primitives</text><text transform="translate(985.20 173.13) scale(0.929 1)" font-size="8.8" fill="#f2f2f2" stroke="#f2f2f2" stroke-width="0.3" font-weight="bold">Object Type</text><text transform="translate(985.20 318.43) scale(0.897 1)" font-size="8.8" fill="#f2f2f2" stroke="#f2f2f2" stroke-width="0.3" font-weight="bold">Name and Color</text><text transform="translate(1048.90 189.06) scale(0.870 1)" font-size="8.3" fill="#6a6a6a" stroke="#6a6a6a" stroke-width="0.3">AutoGrid</text><text transform="translate(1015.50 207.03) scale(0.890 1)" font-size="8.8" fill="#e0e0e0" stroke="#e0e0e0" stroke-width="0.3" text-anchor="middle">Box</text><text transform="translate(1098.80 207.03) scale(0.856 1)" font-size="8.8" fill="#e0e0e0" stroke="#e0e0e0" stroke-width="0.3" text-anchor="middle">Cone</text><text transform="translate(1015.50 225.03) scale(0.881 1)" font-size="8.8" fill="#e0e0e0" stroke="#e0e0e0" stroke-width="0.3" text-anchor="middle">Sphere</text><text transform="translate(1098.80 225.03) scale(0.855 1)" font-size="8.8" fill="#e0e0e0" stroke="#e0e0e0" stroke-width="0.3" text-anchor="middle">GeoSphere</text><text transform="translate(1015.50 243.03) scale(0.867 1)" font-size="8.8" fill="#e0e0e0" stroke="#e0e0e0" stroke-width="0.3" text-anchor="middle">Cylinder</text><text transform="translate(1098.80 243.03) scale(0.887 1)" font-size="8.8" fill="#e0e0e0" stroke="#e0e0e0" stroke-width="0.3" text-anchor="middle">Tube</text><text transform="translate(1015.50 261.03) scale(0.953 1)" font-size="8.8" fill="#e0e0e0" stroke="#e0e0e0" stroke-width="0.3" text-anchor="middle">Torus</text><text transform="translate(1098.80 261.03) scale(0.883 1)" font-size="8.8" fill="#e0e0e0" stroke="#e0e0e0" stroke-width="0.3" text-anchor="middle">Pyramid</text><text transform="translate(1015.50 279.03) scale(0.927 1)" font-size="8.8" fill="#e0e0e0" stroke="#e0e0e0" stroke-width="0.3" text-anchor="middle">Teapot</text><text transform="translate(1098.80 279.03) scale(0.911 1)" font-size="8.8" fill="#e0e0e0" stroke="#e0e0e0" stroke-width="0.3" text-anchor="middle">Plane</text><text transform="translate(1015.50 297.03) scale(0.932 1)" font-size="8.8" fill="#e0e0e0" stroke="#e0e0e0" stroke-width="0.3" text-anchor="middle">TextPlus</text><text transform="translate(12.50 537.12) scale(0.906 1)" font-size="8.5" fill="#e6e6e6" stroke="#e6e6e6" stroke-width="0.3" text-anchor="middle">&lt;</text><text transform="translate(118.00 537.12) scale(0.906 1)" font-size="8.5" fill="#e6e6e6" stroke="#e6e6e6" stroke-width="0.3" text-anchor="middle">&gt;</text><text transform="translate(65.30 537.22) scale(0.981 1)" font-size="8.5" fill="#cecece" stroke="#cecece" stroke-width="0.3" text-anchor="middle">0 / 100</text><text transform="translate(47.90 559.58) scale(0.911 1)" font-size="7.5" fill="#d8cf40" stroke="#d8cf40" stroke-width="0.3" text-anchor="middle">0</text><text transform="translate(101.00 560.22) scale(0.921 1)" font-size="8.2" fill="#c4c4c4" stroke="#c4c4c4" stroke-width="0.3" text-anchor="middle">5</text><text transform="translate(154.10 560.22) scale(0.910 1)" font-size="8.2" fill="#c4c4c4" stroke="#c4c4c4" stroke-width="0.3" text-anchor="middle">10</text><text transform="translate(207.20 560.22) scale(0.910 1)" font-size="8.2" fill="#c4c4c4" stroke="#c4c4c4" stroke-width="0.3" text-anchor="middle">15</text><text transform="translate(260.30 560.22) scale(0.910 1)" font-size="8.2" fill="#c4c4c4" stroke="#c4c4c4" stroke-width="0.3" text-anchor="middle">20</text><text transform="translate(313.40 560.22) scale(0.910 1)" font-size="8.2" fill="#c4c4c4" stroke="#c4c4c4" stroke-width="0.3" text-anchor="middle">25</text><text transform="translate(366.50 560.22) scale(0.910 1)" font-size="8.2" fill="#c4c4c4" stroke="#c4c4c4" stroke-width="0.3" text-anchor="middle">30</text><text transform="translate(419.60 560.22) scale(0.910 1)" font-size="8.2" fill="#c4c4c4" stroke="#c4c4c4" stroke-width="0.3" text-anchor="middle">35</text><text transform="translate(472.70 560.22) scale(0.910 1)" font-size="8.2" fill="#c4c4c4" stroke="#c4c4c4" stroke-width="0.3" text-anchor="middle">40</text><text transform="translate(525.80 560.22) scale(0.910 1)" font-size="8.2" fill="#c4c4c4" stroke="#c4c4c4" stroke-width="0.3" text-anchor="middle">45</text><text transform="translate(578.90 560.22) scale(0.910 1)" font-size="8.2" fill="#c4c4c4" stroke="#c4c4c4" stroke-width="0.3" text-anchor="middle">50</text><text transform="translate(632.00 560.22) scale(0.910 1)" font-size="8.2" fill="#c4c4c4" stroke="#c4c4c4" stroke-width="0.3" text-anchor="middle">55</text><text transform="translate(685.10 560.22) scale(0.910 1)" font-size="8.2" fill="#c4c4c4" stroke="#c4c4c4" stroke-width="0.3" text-anchor="middle">60</text><text transform="translate(738.20 560.22) scale(0.910 1)" font-size="8.2" fill="#c4c4c4" stroke="#c4c4c4" stroke-width="0.3" text-anchor="middle">65</text><text transform="translate(791.30 560.22) scale(0.910 1)" font-size="8.2" fill="#c4c4c4" stroke="#c4c4c4" stroke-width="0.3" text-anchor="middle">70</text><text transform="translate(844.40 560.22) scale(0.910 1)" font-size="8.2" fill="#c4c4c4" stroke="#c4c4c4" stroke-width="0.3" text-anchor="middle">75</text><text transform="translate(897.50 560.22) scale(0.910 1)" font-size="8.2" fill="#c4c4c4" stroke="#c4c4c4" stroke-width="0.3" text-anchor="middle">80</text><text transform="translate(950.60 560.22) scale(0.910 1)" font-size="8.2" fill="#c4c4c4" stroke="#c4c4c4" stroke-width="0.3" text-anchor="middle">85</text><text transform="translate(1003.70 560.22) scale(0.910 1)" font-size="8.2" fill="#c4c4c4" stroke="#c4c4c4" stroke-width="0.3" text-anchor="middle">90</text><text transform="translate(1056.80 560.22) scale(0.910 1)" font-size="8.2" fill="#c4c4c4" stroke="#c4c4c4" stroke-width="0.3" text-anchor="middle">95</text><text transform="translate(1109.90 560.22) scale(0.914 1)" font-size="8.2" fill="#c4c4c4" stroke="#c4c4c4" stroke-width="0.3" text-anchor="middle">100</text><text transform="translate(663.70 51.64) scale(0.819 1)" font-size="10.3" fill="#ececec" stroke="#ececec" stroke-width="0.3">Arnold RenderView</text><text transform="translate(663.70 67.89) scale(0.810 1)" font-size="10.3" fill="#ececec" stroke="#ececec" stroke-width="0.3">Flush Caches</text><text transform="translate(663.70 84.14) scale(0.853 1)" font-size="10.3" fill="#ececec" stroke="#ececec" stroke-width="0.3">Operator Graph</text><text transform="translate(663.70 100.39) scale(0.818 1)" font-size="10.3" fill="#ececec" stroke="#ececec" stroke-width="0.3">Pre-populate GPU Cache</text><text transform="translate(663.70 116.64) scale(0.855 1)" font-size="10.3" fill="#ececec" stroke="#ececec" stroke-width="0.3">Arbitrary Output Variables (AOVs)</text><text transform="translate(663.70 132.89) scale(0.836 1)" font-size="10.3" fill="#ececec" stroke="#ececec" stroke-width="0.3">AOV Light Group Manager</text><text transform="translate(663.70 149.14) scale(0.906 1)" font-size="10.3" fill="#ececec" stroke="#ececec" stroke-width="0.3">Import/Export</text><text transform="translate(663.70 165.39) scale(0.793 1)" font-size="10.3" fill="#ececec" stroke="#ececec" stroke-width="0.3">Licensing</text><text transform="translate(663.70 181.64) scale(0.803 1)" font-size="10.3" fill="#ececec" stroke="#ececec" stroke-width="0.3">Help</text></g></svg>
</body></html>
